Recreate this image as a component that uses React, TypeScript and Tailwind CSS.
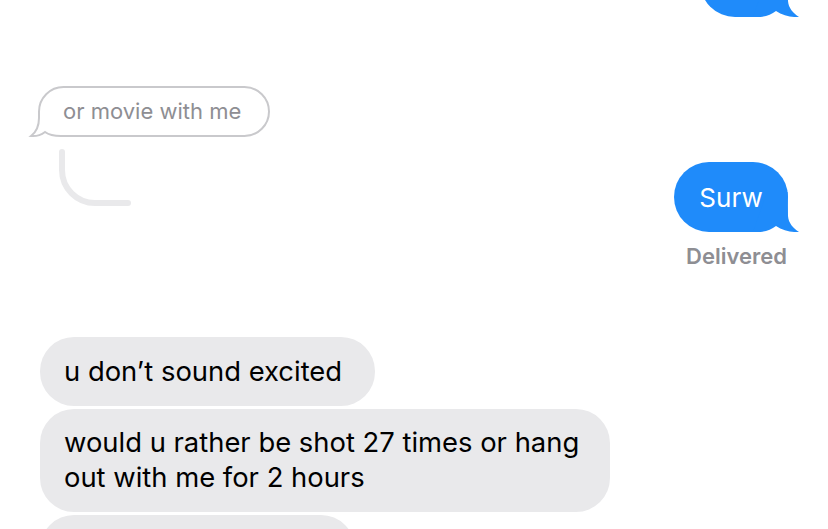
const font = { fontFamily: 'Inter, "Noto Sans", sans-serif' };

function BlueTail() {
  return (
    <svg className="absolute right-[-12px] bottom-0 w-[47px] h-[40px]" viewBox="0 0 47 40">
      <path
        d="M14 0 H34.6 C35 10 35 18 35 24 C35.5 31 40 36 46 40 C40 40.5 30 39 23 34 C18 38 12 40 4 40 L0 40 Z"
        fill="#1f8bfa"
      />
    </svg>
  );
}

function SentBubble({ text, width }: { text?: string; width: string }) {
  return (
    <div className={`relative shrink-0 h-[70px] rounded-[35px] bg-[#1f8bfa] ${width} flex items-center justify-center`}>
      <BlueTail />
      {text && <span className="relative text-[26px] text-white">{text}</span>}
    </div>
  );
}

function ReceivedBubble({ children, width, className = '' }: { children?: React.ReactNode; width: string; className?: string }) {
  return (
    <div className={`shrink-0 rounded-[34px] bg-[#e9e9eb] pl-[24px] text-[27.4px] leading-[35px] text-black ${width} ${className}`}>
      {children}
    </div>
  );
}

export default function App() {
  return (
    <div className="w-[828px] h-[529px] overflow-hidden bg-white flex flex-col" style={font}>
      {/* previous sent message, cut off at the top */}
      <div className="shrink-0 self-end mr-[40px] mt-[-53px] w-[88px]">
        <SentBubble width="w-[88px]" />
      </div>

      {/* replied-to message (outlined) */}
      <div className="relative shrink-0 ml-[38px] mt-[69px] w-[232px] h-[51px]">
        <div className="w-full h-full rounded-[26px] rounded-bl-none border-2 border-[#c9c9cc] flex items-center pl-[23px]">
          <span className="relative z-10 text-[22px] text-[#8e8e93]">or movie with me</span>
        </div>
        <svg className="absolute left-[-10px] top-[24px] w-[34px] h-[29px] overflow-visible" viewBox="-10 24 34 29">
          <rect x="-1" y="28" width="23" height="24" fill="#fff" />
          <path
            d="M1 26 V32 C1 41 -3 47 -7 50 C-2 50.5 3 49 7 46 C11 49 16 50 23 50"
            fill="none"
            stroke="#c9c9cc"
            strokeWidth="2"
          />
        </svg>
      </div>

      <div className="shrink-0 flex justify-between items-start pl-[55px] pr-[40px]">
        {/* reply thread line */}
        <svg className="shrink-0 mt-[8px] w-[80px] h-[64px]" viewBox="0 0 80 64">
          <path d="M7 7 V25 A33 33 0 0 0 40 58 H73" fill="none" stroke="#e9e9eb" strokeWidth="6" strokeLinecap="round" />
        </svg>

        <div className="mt-[25px] flex flex-col items-end">
          <SentBubble text="Surw" width="w-[114px]" />
          <span className="mt-[12px] mr-[1px] text-[22px] leading-[24px] font-semibold text-[#8e8e93]">Delivered</span>
        </div>
      </div>

      <div className="shrink-0 mt-[69px] ml-[40px] flex flex-col gap-[3px]">
        <ReceivedBubble width="w-[335px]" className="py-[17px]">
          u don’t sound excited
        </ReceivedBubble>
        <ReceivedBubble width="w-[570px]" className="pt-[16px] pb-[17px]">
          would u rather be shot 27 times or hang
          <br />
          out with me for 2 hours
        </ReceivedBubble>
        <ReceivedBubble width="w-[315px]" className="h-[69px]" />
      </div>
    </div>
  );
}
